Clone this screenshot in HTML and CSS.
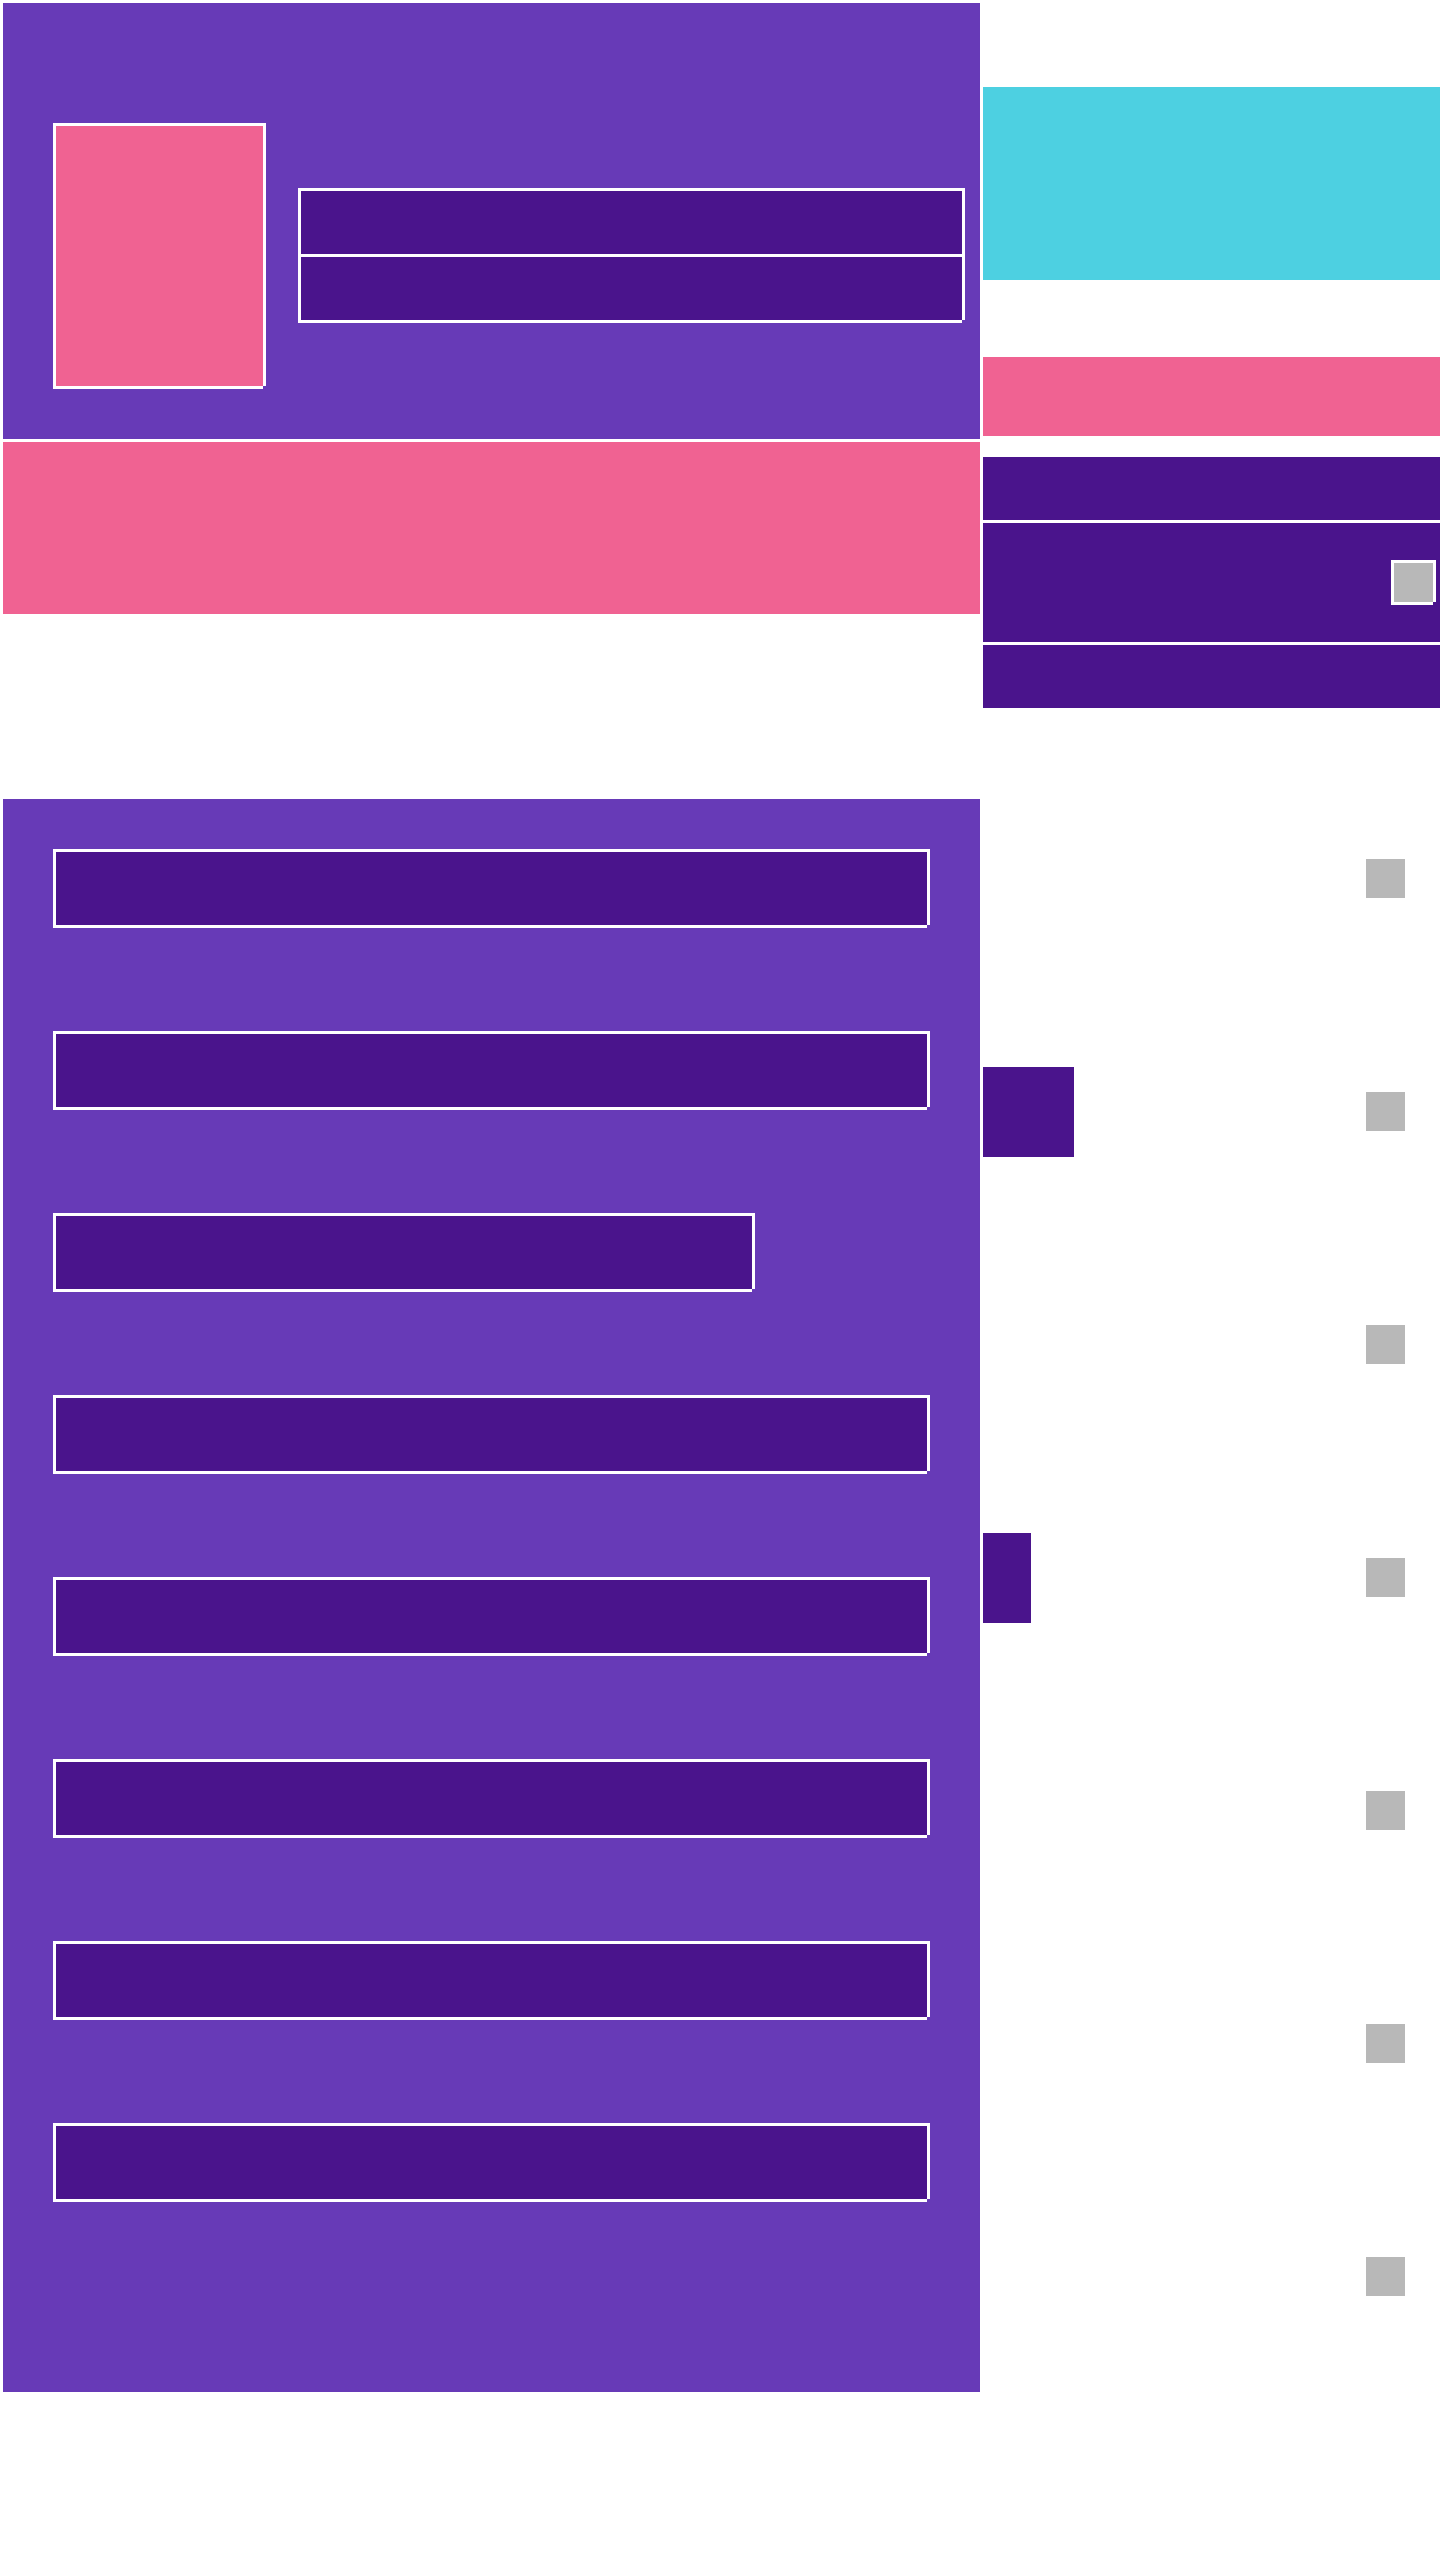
FILE: index.html
```html
<!DOCTYPE html>
<html lang="en">
<head>
<meta charset="utf-8">
<title>Profile</title>
<link rel="stylesheet" href="styles.css">
</head>
<body>
<div class="page">
  <main class="main-col">
    <section class="hero">
      <div class="photo frame"></div>
      <div class="hero-lines">
        <div class="line frame"></div>
        <div class="line frame"></div>
      </div>
    </section>
    <section class="banner"></section>
    <section class="form">
      <div class="field frame"></div>
      <div class="field frame"></div>
      <div class="field field-short frame"></div>
      <div class="field frame"></div>
      <div class="field frame"></div>
      <div class="field frame"></div>
      <div class="field frame"></div>
      <div class="field frame"></div>
    </section>
  </main>
  <aside class="side-col">
    <div class="side-card"></div>
    <div class="side-tag"></div>
    <div class="side-menu">
      <div class="menu-item"></div>
      <div class="menu-item menu-item-tall">
        <span class="check frame"></span>
      </div>
      <div class="menu-item"></div>
    </div>
    <ul class="side-list">
      <li class="list-row"><span class="dot"></span></li>
      <li class="list-row"><span class="chip chip-wide"></span><span class="dot"></span></li>
      <li class="list-row"><span class="dot"></span></li>
      <li class="list-row"><span class="chip chip-narrow"></span><span class="dot"></span></li>
      <li class="list-row"><span class="dot"></span></li>
      <li class="list-row"><span class="dot"></span></li>
      <li class="list-row"><span class="dot"></span></li>
    </ul>
  </aside>
</div>
</body>
</html>
```

FILE: styles.css
```css
* {
  box-sizing: border-box;
}

html, body {
  margin: 0;
  padding: 0;
  background: #ffffff;
  font-family: "Liberation Sans", Arial, sans-serif;
}

.page {
  display: grid;
  grid-template-columns: 977px 457px;
  column-gap: 3px;
  padding: 3px 0 0 3px;
  align-items: start;
}

/* white frame with the notched bottom-right corner */
.frame {
  border-top: 3px solid #ffffff;
  border-left: 3px solid #ffffff;
  box-shadow: 3px 0 0 #ffffff, 0 3px 0 #ffffff;
}

/* ---------- main column ---------- */
.main-col {
  display: flex;
  flex-direction: column;
}

.hero {
  display: flex;
  align-items: flex-start;
  gap: 35px;
  height: 436px;
  padding: 120px 18px 53px 50px;
  background: #673ab7;
}

.photo {
  flex: none;
  width: 210px;
  height: 263px;
  background: #f06292;
}

.hero-lines {
  display: flex;
  flex-direction: column;
  width: 664px;
  margin-top: 65px;
}

.line {
  height: 66px;
  background: #4a148c;
}

.banner {
  height: 172px;
  margin-top: 3px;
  background: #f06292;
}

.form {
  display: flex;
  flex-direction: column;
  gap: 106px;
  margin-top: 185px;
  padding: 50px 0 193px 50px;
  background: #673ab7;
}

.field {
  width: 874px;
  height: 76px;
  background: #4a148c;
}

.field-short {
  width: 699px;
}

/* ---------- side column ---------- */
.side-col {
  display: flex;
  flex-direction: column;
}

.side-card {
  height: 193px;
  margin-top: 84px;
  background: #4dd0e1;
}

.side-tag {
  height: 79px;
  margin-top: 77px;
  background: #f06292;
}

.side-menu {
  display: flex;
  flex-direction: column;
  gap: 3px;
  margin-top: 21px;
}

.menu-item {
  height: 63px;
  background: #4a148c;
}

.menu-item-tall {
  display: flex;
  align-items: flex-start;
  justify-content: flex-end;
  height: 119px;
  padding: 37px 7px 0 0;
}

.check {
  display: block;
  width: 42px;
  height: 42px;
  background: #b8b8b8;
}

.side-list {
  list-style: none;
  margin: 54px 0 0;
  padding: 0;
}

.list-row {
  display: flex;
  align-items: center;
  height: 233px;
  padding-right: 35px;
}

.chip {
  display: block;
  height: 90px;
  background: #4a148c;
}

.chip-wide {
  width: 91px;
}

.chip-narrow {
  width: 48px;
}

.dot {
  display: block;
  width: 39px;
  height: 39px;
  margin-left: auto;
  background: #b8b8b8;
}
```
